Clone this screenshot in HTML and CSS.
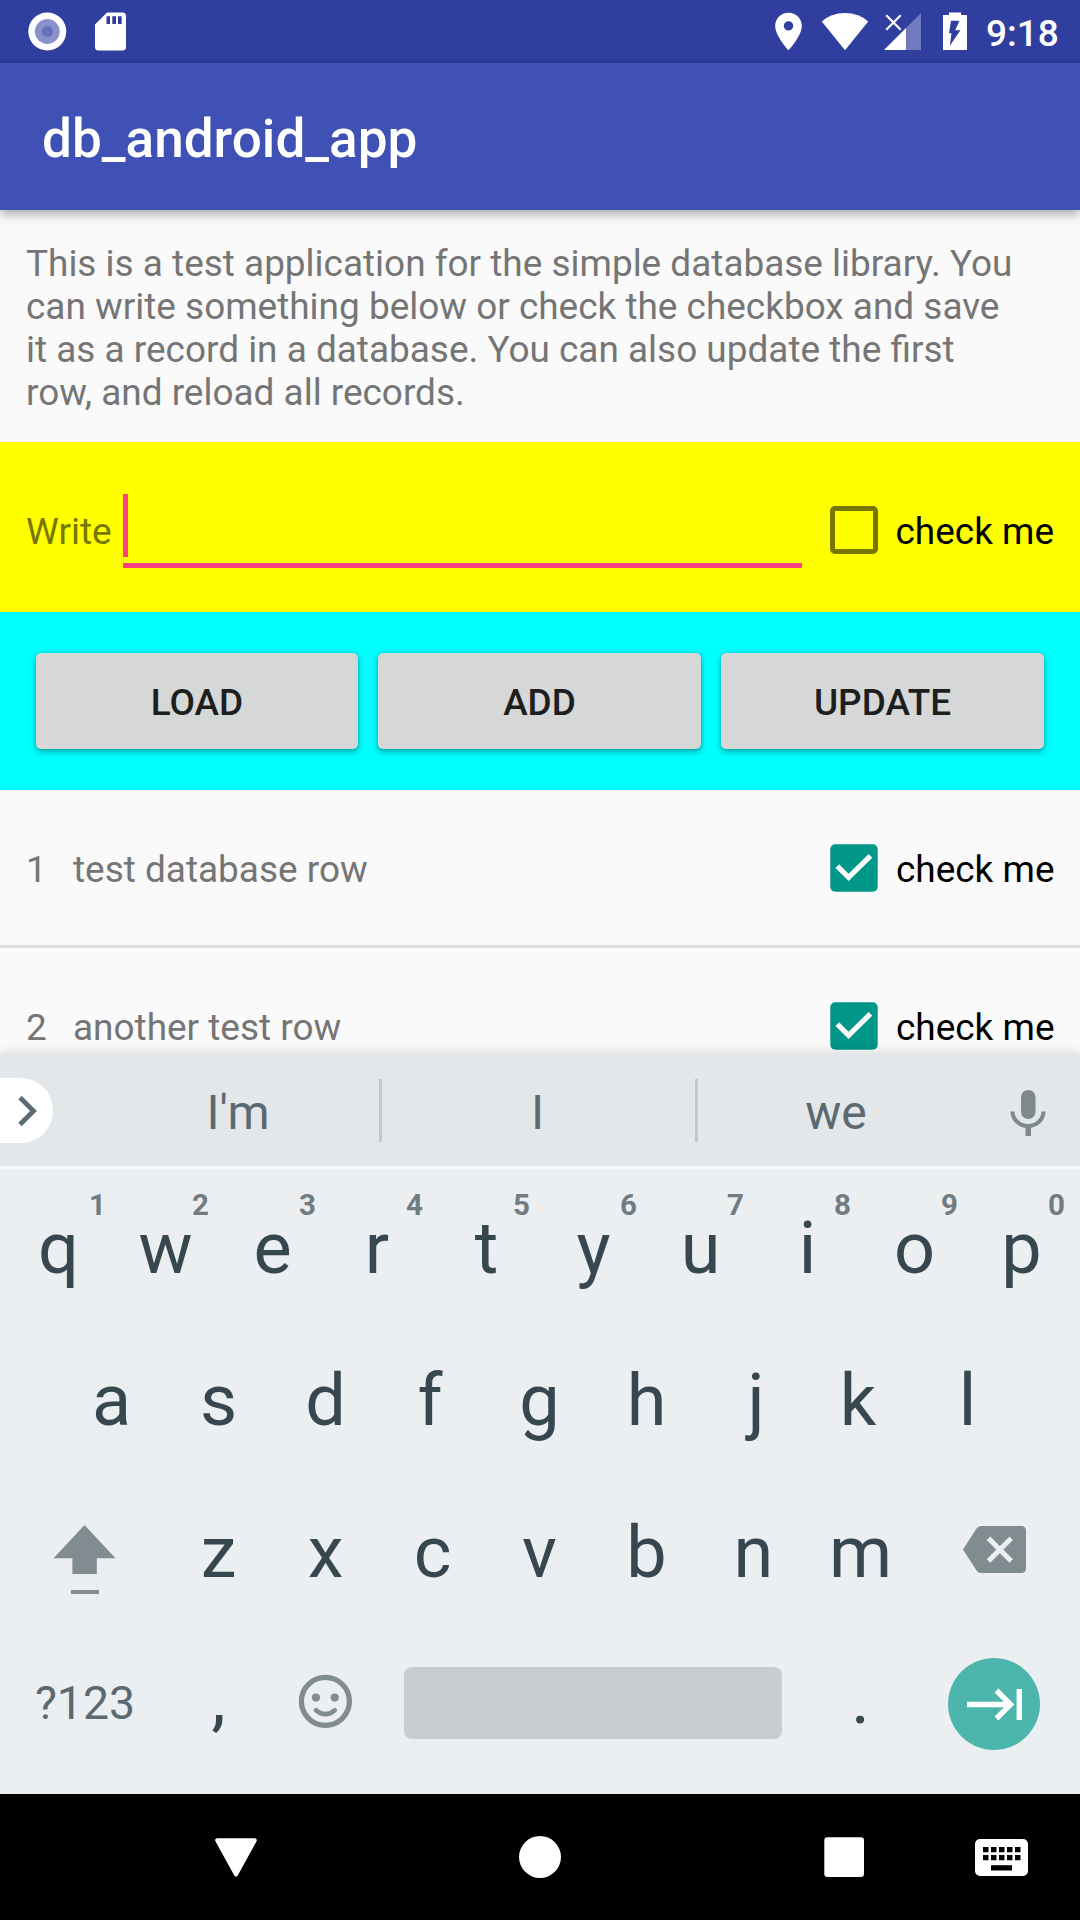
FILE: index.html
```html
<!DOCTYPE html>
<html lang="en">
<head>
<meta charset="utf-8">
<title>db_android_app</title>
<link rel="stylesheet" href="styles.css">
</head>
<body>
<div class="screen">
  <header class="status">
    <svg class="notif" width="80" height="63" viewBox="0 0 80 63"><circle cx="47.3" cy="31.5" r="19" fill="#fff"/><circle cx="47.3" cy="31.5" r="12.4" fill="#8991cb"/><circle cx="47.3" cy="31.5" r="5.6" fill="#6771b9"/></svg>
    <svg width="60" height="63" viewBox="80 0 60 63"><path fill="#fff" fill-rule="evenodd" d="M107 12.500H122.500Q126 12.500 126 16V47Q126 50.500 122.500 50.500H98.500Q95 50.500 95 47V24.500ZM106.500 16.300V24H110V16.300ZM112.300 16.300V24H116V16.300ZM118 16.300V24H121.700V16.300Z"/></svg>
    <span class="spacer"></span>
    <svg width="53" height="63" viewBox="762 0 53 63"><path fill="#fff" fill-rule="evenodd" d="M788.500 12.700C781 12.700 775.200 18.600 775.200 26C775.200 36 788.500 50.300 788.500 50.300S801.800 36 801.800 26C801.800 18.600 796 12.700 788.500 12.700ZM788.500 21.200A4.700 4.700 0 1 1 788.500 30.600A4.700 4.700 0 1 1 788.500 21.200Z"/></svg>
    <svg width="60" height="63" viewBox="815 0 60 63"><path fill="#fff" d="M845 50.300L821.800 21.500Q831 13 845 13T868.200 21.500Z"/></svg>
    <svg width="55" height="63" viewBox="875 0 55 63"><path fill="#fff" fill-opacity=".31" d="M906 28L921 13V50H906Z"/><path fill="#fff" d="M884 50L906 28V50Z"/><path stroke="#fff" stroke-width="2.200" d="M886.300 15.300L900.700 29.700M900.700 15.300L886.300 29.700"/></svg>
    <svg width="50" height="63" viewBox="930 0 50 63"><path fill="#fff" fill-rule="evenodd" d="M949 12.500H961V15H967V50H943V15H949ZM951 20.700L949 33.300H951.500L949.800 45.700L960.500 30.300H955.200L959.500 20.700Z"/></svg>
    <span class="clock">9:18</span>
  </header>
  <div class="appbar"><h1>db_android_app</h1></div>
  <p class="intro">This is a test application for the simple database library. You<br>can write something below or check the checkbox and save<br>it as a record in a database. You can also update the first<br>row, and reload all records.</p>
  <section class="form">
    <span class="label">Write</span>
    <div class="field"><i class="caret"></i></div>
    <i class="box"></i><span class="cbtext">check me</span>
  </section>
  <section class="actions">
    <button>LOAD</button><button>ADD</button><button>UPDATE</button>
  </section>
  <ul class="list">
    <li><span class="num">1</span><span class="name">test database row</span><svg class="tick" width="48" height="48" viewBox="0 0 48 48"><rect x=".3" y=".3" width="47.400" height="47.400" rx="5" fill="#009688"/><path d="M7.300 22.200L18.600 33.300L40.500 11.800" fill="none" stroke="#fafafa" stroke-width="5.200"/></svg><span class="cbtext">check me</span></li>
    <li><span class="num">2</span><span class="name">another test row</span><svg class="tick" width="48" height="48" viewBox="0 0 48 48"><rect x=".3" y=".3" width="47.400" height="47.400" rx="5" fill="#009688"/><path d="M7.300 22.200L18.600 33.300L40.500 11.800" fill="none" stroke="#fafafa" stroke-width="5.200"/></svg><span class="cbtext">check me</span></li>
  </ul>
  <section class="keyboard">
    <div class="suggest">
      <div class="chip"><svg width="53" height="65" viewBox="0 1078 53 65"><path d="M20 1097.500L33.500 1111L20 1124.500" fill="none" stroke="#5b6b72" stroke-width="4.800"/></svg></div>
      <span class="word left">I'm</span><i class="sep"></i><span class="word">I</span><i class="sep"></i><span class="word right">we</span>
      <svg class="mic" width="58" height="113" viewBox="999 1053 58 113"><rect x="1021" y="1090" width="14.500" height="29" rx="7.250" fill="#7e898d"/><path d="M1012.500 1111.500C1012.500 1119.500 1019.500 1126 1028 1126S1043.500 1119.500 1043.500 1111.500" fill="none" stroke="#7e898d" stroke-width="4"/><rect x="1025.500" y="1126" width="5.500" height="10" fill="#7e898d"/></svg>
    </div>
    <div class="keys">
      <div class="row"><span class="key">q<sup class="one">1</sup></span><span class="key">w<sup>2</sup></span><span class="key">e<sup>3</sup></span><span class="key nudge-left">r<sup>4</sup></span><span class="key">t<sup>5</sup></span><span class="key">y<sup>6</sup></span><span class="key">u<sup>7</sup></span><span class="key">i<sup>8</sup></span><span class="key">o<sup>9</sup></span><span class="key">p<sup>0</sup></span></div>
      <div class="row home"><span class="key">a</span><span class="key">s</span><span class="key">d</span><span class="key nudge-left">f</span><span class="key">g</span><span class="key">h</span><span class="key nudge-right">j</span><span class="key nudge-left">k</span><span class="key">l</span></div>
      <div class="row">
        <svg width="160" height="152" viewBox="5 1473 160 152"><path fill="#808c90" d="M84.500 1525L115.500 1558.300H96.800V1574H72.400V1558.300H53.500ZM71 1590H99V1594H71Z"/></svg>
        <span class="key">z</span><span class="key">x</span><span class="key">c</span><span class="key">v</span><span class="key">b</span><span class="key">n</span><span class="key">m</span>
        <svg width="161" height="152" viewBox="914 1473 161 152"><path fill="#808c90" d="M963 1549.500L976.500 1528.500Q978 1526 981 1526H1021Q1026 1526 1026 1531V1568Q1026 1573 1021 1573H981Q978 1573 976.500 1570.500Z"/><path stroke="#eceff1" stroke-width="5" d="M988.500 1538.200L1011.200 1561M1011.200 1538.200L988.500 1561"/></svg>
      </div>
      <div class="row bottom">
        <span class="mode">?123</span><span class="key">,</span>
        <svg width="107" height="152" viewBox="272 1625 107 152"><circle cx="325.400" cy="1701.300" r="24" fill="none" stroke="#808c90" stroke-width="5.300"/><circle cx="315.900" cy="1697.600" r="4.100" fill="#808c90"/><circle cx="334.700" cy="1697.600" r="4.100" fill="#808c90"/><path d="M316 1710.200Q325.400 1718.200 334.800 1710.200" fill="none" stroke="#808c90" stroke-width="4.500" stroke-linecap="round"/></svg>
        <i class="space"></i><span class="key">.</span>
        <svg width="161" height="152" viewBox="914 1625 161 152"><circle cx="994" cy="1704" r="46" fill="#4db6ac"/><path fill="none" stroke="#fff" stroke-width="5.400" d="M967 1704.500H1010M996.500 1690.500L1010.500 1704.500L996.500 1718.500M1019.300 1689V1720"/></svg>
      </div>
    </div>
  </section>
  <nav class="nav">
    <svg width="1080" height="126" viewBox="0 1794 1080 126"><path fill="#fff" stroke="#fff" stroke-width="4" stroke-linejoin="round" d="M217.200 1840.300H254.800L236 1874.500Z"/><circle cx="540" cy="1857" r="21" fill="#fff"/><rect x="824.300" y="1837.300" width="39.700" height="39.700" rx="3" fill="#fff"/><rect x="975" y="1839" width="53" height="37" rx="5" fill="#fff"/><path stroke="#000" stroke-width="5.300" stroke-dasharray="5.500 2.500" d="M983 1849.600H1020.500M983 1857.600H1020.500"/><rect x="991" y="1865.200" width="21" height="5.300"/></svg>
  </nav>
</div>
</body>
</html>
```
FILE: styles.css
```css
* { box-sizing: border-box; }
body { margin: 0; font-family: Roboto, sans-serif; background: #fafafa; }
.screen { width: 1080px; height: 1920px; display: flex; flex-direction: column; overflow: hidden; font-size: 36.95px; line-height: 43px; }
svg { display: block; flex: none; }

.status { height: 63px; flex: none; display: flex; background: #303f9f; }
.spacer { flex: 1; }
.clock { width: 100px; padding: 12px 0 0 6px; color: #fff; font-weight: 500; }

.appbar { height: 147px; flex: none; display: flex; align-items: center; padding-left: 42px; background: #3f51b5; box-shadow: 0 4px 10px rgba(0,0,0,.34); position: relative; }
.appbar h1 { margin: 5px 0 0; color: #fff; font-size: 53.1px; line-height: 62px; font-weight: 500; }

.intro { height: 232px; flex: none; margin: 0; padding: 32px 26px 0; color: #757575; white-space: nowrap; }

.form { height: 170px; flex: none; display: flex; align-items: center; padding: 6px 26px 0; background: #ff0; }
.label { width: 97px; padding-top: 2px; color: #777700; }
.field { width: 679px; height: 74px; border-bottom: 5px solid #ff4081; margin-top: 2px; }
.caret { display: block; width: 5px; height: 63px; background: #ff4081; }
.box { width: 48px; height: 48px; flex: none; margin-left: 28px; border: 5.500px solid #777700; border-radius: 5px; }
.cbtext { margin-left: 18px; padding-top: 2px; color: #000; white-space: nowrap; }

.actions { height: 178px; flex: none; display: grid; grid-template-columns: 322px 323px 323px; gap: 20px; padding: 41px 36px; background: #0ff; }
.actions button { height: 96px; padding: 2px 0 0; border: 0; border-radius: 5px; background: #d6d7d7; color: #1d1e1e; font: 500 36.95px/43px Roboto, sans-serif; box-shadow: 0 3px 6px rgba(0,0,0,.32), 0 0 3px rgba(0,0,0,.16); }

.list { height: 263px; flex: none; margin: 0; padding: 0; list-style: none; overflow: hidden; color: #757575; }
.list li { height: 158px; display: flex; align-items: center; padding: 1px 0 0 26px; border-bottom: 3px solid #dadbdb; }
.num { width: 47px; padding-top: 2px; }
.name { width: 757px; padding-top: 2px; }

.keyboard { flex: none; position: relative; height: 741px; background: #eceff1; box-shadow: 0 0 12px rgba(0,0,0,.14); }
.suggest { height: 116px; display: flex; align-items: center; background: #e3e7e9; border-bottom: 3px solid #f6f8f9; }
.chip { width: 53px; height: 65px; border-radius: 0 32px 32px 0; background: #fff; margin: 2px 42px 0 0; }
.word { width: 313px; text-align: center; font-size: 48px; line-height: 56px; color: #5b6a71; padding: 6px 2px 0 0; }
.word.left { width: 284px; padding: 6px 0 0 2px; }
.word.right { width: 284px; padding-right: 8px; }
.sep { width: 3px; height: 63px; background: #c3c7ca; margin-top: 2px; }
.mic { margin-left: 17px; }
.keys { padding: 0 5px; display: flex; flex-direction: column; }
.row { height: 152px; display: flex; }
.row.home { padding-left: 53px; }
.key { width: 107px; flex: none; text-align: center; position: relative; font-size: 72px; line-height: 84px; padding-top: 38px; color: #37474f; }
.nudge-left { padding-right: 5px; }
.nudge-right { padding-left: 5px; }
.key sup { position: absolute; right: 10px; top: 18px; font-size: 29.5px; line-height: 36px; font-weight: 700; color: #707c81; }
.key sup.one { right: 6px; }
.bottom .key { padding-top: 32px; }
.mode { width: 160px; text-align: center; font-size: 46.4px; line-height: 56px; color: #5b6a71; padding-top: 50px; }
.space { width: 378px; height: 72px; margin: 42px 25px 0; border-radius: 8px; background: #c9cdd0; }

.nav { flex: none; height: 126px; background: #000; position: relative; }
```
